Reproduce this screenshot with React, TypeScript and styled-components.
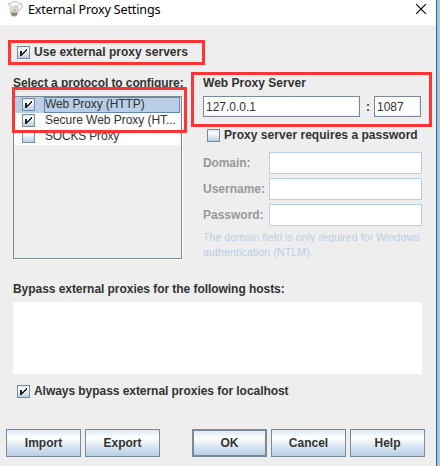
import React from 'react';
import styled, { createGlobalStyle } from 'styled-components';

const Global = createGlobalStyle`
  * { box-sizing: border-box; }
  body { margin: 0; overflow: hidden; background: #eee; }
`;

const oceanGradient = 'linear-gradient(#dde8f3 0%, #fff 30%, #dde8f3 60%, #b8cfe5 100%)';

const Dialog = styled.div`
  position: relative;
  width: 440px;
  height: 466px;
  padding-right: 4px;
  background: linear-gradient(90deg, #0078d7 0 1px, #b4b4b4 1px, #c8c8c8 4px) right / 4px 100% no-repeat, #eee;
  font: bold 12px 'Liberation Sans', Arial, sans-serif;
  color: #333;
  overflow: hidden;
`;

const TitleBar = styled.header`
  display: flex;
  height: 25px;
  background: #fff;
  color: #000;
  padding: 0 10px 0 7px;
  justify-content: space-between;
`;

const TitleGroup = styled.div`
  display: flex;
  gap: 5px;
`;

const Title = styled.span`
  font: 12.6px/19px 'Noto Sans', 'Open Sans', sans-serif;
  letter-spacing: -0.16px;
  white-space: nowrap;
`;

const CloseIcon = styled.svg`
  margin-top: 4px;
`;

const Label = styled.span<{ $spacing?: number; $muted?: boolean }>`
  line-height: 14px;
  white-space: nowrap;
  letter-spacing: ${p => p.$spacing ?? 0}px;
  color: ${p => (p.$muted ? '#999' : '#333')};
`;

const CheckRow = styled.label`
  display: flex;
  align-items: flex-start;
  gap: 4px;
  height: 14px;

  ${Label} {
    margin-top: -1px;
  }
`;

const Box = styled.span`
  flex: none;
  width: 13px;
  height: 13px;
  border: 1px solid #7a8a99;
  background: ${oceanGradient};
`;

const Tick = styled.svg`
  display: block;
  margin: -1px;
`;

const EnableRow = styled.div`
  padding: 21px 0 0 17px;
  height: 51px;
`;

const Columns = styled.div`
  display: grid;
  grid-template-columns: 170px 219px;
  column-gap: 20px;
  padding-left: 13px;
  height: 206px;
`;

const Column = styled.section`
  display: flex;
  flex-direction: column;
`;

const List = styled.ul`
  list-style: none;
  margin: 6px 0 0;
  padding: 0 1px 0 0;
  width: 169px;
  height: 163px;
  border: 1px solid #7a8a99;
  box-shadow: 1px 1px 0 #fff;
`;

const ListItem = styled.li<{ $selected?: boolean }>`
  display: flex;
  align-items: flex-start;
  height: 16px;
  padding-left: 8px;
  background: ${p => (p.$selected ? '#b8cfe5' : '#fff')};

  ${Box} {
    margin-top: 1px;
  }
`;

const ItemText = styled.span<{ $selected?: boolean; $spacing: number }>`
  flex: 1;
  margin-left: 9px;
  height: 16px;
  border: 1px solid ${p => (p.$selected ? '#6382bf' : 'transparent')};
  font-weight: normal;
  line-height: 13px;
  letter-spacing: ${p => p.$spacing}px;
  white-space: nowrap;
`;

const ServerRow = styled.div`
  display: flex;
  align-items: center;
  margin: 6px 0 12px;
  height: 21px;
`;

const Colon = styled.span`
  width: 14px;
  text-align: center;
  padding-left: 2px;
`;

const Field = styled.input<{ $width: number; $inactive?: boolean }>`
  width: ${p => p.$width}px;
  height: ${p => (p.$inactive ? 22 : 21)}px;
  padding: 0 0 0 2px;
  border: 1px solid ${p => (p.$inactive ? '#b8cfe5' : '#7a8a99')};
  border-radius: 0;
  box-shadow: ${p => (p.$inactive ? 'none' : 'inset -1px -1px 0 #eee')};
  background: #fff;
  color: #333;
  font: 12px 'Liberation Sans', Arial, sans-serif;
  outline: 0;
`;

const PasswordCheck = styled.div`
  padding-left: 4px;
  height: 23px;
`;

const Credentials = styled.div`
  display: grid;
  grid-template-columns: 66px 153px;
  row-gap: 4px;
  align-items: center;
`;

const Note = styled.p`
  margin: 4px 0 0;
  font-size: 10.5px;
  font-weight: normal;
  line-height: 15px;
  color: #b8cfe5;
  white-space: nowrap;
`;

const NoteLine = styled.span<{ $spacing: number }>`
  display: block;
  letter-spacing: ${p => p.$spacing}px;
`;

const Bypass = styled.section`
  display: flex;
  flex-direction: column;
  padding-left: 13px;
`;

const Hosts = styled.textarea`
  width: 409px;
  height: 72px;
  margin: 6px 0 11px;
  border: 0;
  resize: none;
  background: #fff;
  outline: 0;
`;

const BypassCheck = styled.div`
  padding-left: 4px;
`;

const Footer = styled.footer`
  display: flex;
  justify-content: space-between;
  padding: 30px 11px 0 6px;
`;

const ButtonGroup = styled.div`
  display: flex;
  gap: 4px;
`;

const Button = styled.button<{ $primary?: boolean }>`
  width: 75px;
  height: 28px;
  padding: 0 0 1px;
  border: ${p => (p.$primary ? 2 : 1)}px solid #7a8a99;
  border-radius: 0;
  background: ${oceanGradient};
  color: #333;
  font: bold 12px 'Liberation Sans', Arial, sans-serif;
`;

const Highlight = styled.div<{ $x: number; $y: number; $w: number; $h: number }>`
  position: absolute;
  left: ${p => p.$x}px;
  top: ${p => p.$y}px;
  width: ${p => p.$w}px;
  height: ${p => p.$h}px;
  border: 3px solid #ff3535;
  pointer-events: none;
`;

const JugSvg = styled.svg`
  flex: none;
`;

function Jug() {
  return (
    <JugSvg width="16" height="18" viewBox="0 0 16 18">
      <path d="M1 3.2 3.4 3.6 5 2 10 1.2 11.5 2.8 15 3.8 15.2 7 12.4 11 10.6 13.2 10 15.5 7 16.3 4.4 15.4 3.6 12 3.2 7Z" fill="#eceae7" stroke="#b9b8b4" strokeWidth="0.8" />
      <path d="M12.2 5 14 5.4 13.6 7.4 12.2 9Z" fill="#fff" />
      <path d="M4 12.2 10.3 12.8 9.8 15.3 7 16.2 4.6 15.3Z" fill="#8f8a82" />
      <path d="M4.5 4.3 10.5 3" stroke="#fff" strokeWidth="1.5" />
      <circle cx="6" cy="8" r=".8" fill="#b59a6d" />
      <circle cx="9" cy="7" r=".8" fill="#5ba36a" />
      <circle cx="8" cy="9.7" r=".8" fill="#d0655c" />
      <circle cx="10.4" cy="9.6" r=".8" fill="#b573ae" />
      <circle cx="6" cy="11" r=".8" fill="#6aa35a" />
      <circle cx="9" cy="12" r=".7" fill="#d0544a" />
    </JugSvg>
  );
}

function CheckBox({ checked }: { checked?: boolean }) {
  return (
    <Box>
      {checked && (
        <Tick width="13" height="13" viewBox="0 0 13 13" shapeRendering="crispEdges" fill="#222">
          <path d="M3 5h2v5H3z M9 3h1v2H9z M8 4h1v2H8z M7 5h1v2H7z M6 6h1v2H6z M5 7h1v2H5z" />
        </Tick>
      )}
    </Box>
  );
}

const protocols = [
  { name: 'Web Proxy (HTTP)', checked: true, selected: true, spacing: -0.1 },
  { name: 'Secure Web Proxy (HT...', checked: true, selected: false, spacing: -0.04 },
  { name: 'SOCKS Proxy', checked: false, selected: false, spacing: -0.18 },
];

export default function App() {
  return (
    <Dialog>
      <Global />
      <TitleBar>
        <TitleGroup>
          <Jug />
          <Title>External Proxy Settings</Title>
        </TitleGroup>
        <CloseIcon width="10" height="10" viewBox="0 0 10 10">
          <path d="M0 0 10 10M10 0 0 10" stroke="#000" strokeWidth="1.1" />
        </CloseIcon>
      </TitleBar>

      <EnableRow>
        <CheckRow>
          <CheckBox checked />
          <Label $spacing={0.02}>Use external proxy servers</Label>
        </CheckRow>
      </EnableRow>

      <Columns>
        <Column>
          <Label $spacing={-0.09}>Select a protocol to configure:</Label>
          <List>
            {protocols.map(p => (
              <ListItem key={p.name} $selected={p.selected}>
                <CheckBox checked={p.checked} />
                <ItemText $selected={p.selected} $spacing={p.spacing}>{p.name}</ItemText>
              </ListItem>
            ))}
          </List>
        </Column>
        <Column>
          <Label $spacing={0.02}>Web Proxy Server</Label>
          <ServerRow>
            <Field $width={157} defaultValue="127.0.0.1" />
            <Colon>:</Colon>
            <Field $width={47} defaultValue="1087" />
          </ServerRow>
          <PasswordCheck>
            <CheckRow>
              <CheckBox />
              <Label $spacing={0.03}>Proxy server requires a password</Label>
            </CheckRow>
          </PasswordCheck>
          <Credentials>
            <Label $muted $spacing={-0.1}>Domain:</Label>
            <Field $width={153} $inactive readOnly />
            <Label $muted>Username:</Label>
            <Field $width={153} $inactive readOnly />
            <Label $muted>Password:</Label>
            <Field $width={153} $inactive readOnly />
          </Credentials>
          <Note>
            <NoteLine $spacing={0.09}>The domain field is only required for Windows</NoteLine>
            <NoteLine $spacing={0.14}>authentication (NTLM).</NoteLine>
          </Note>
        </Column>
      </Columns>

      <Bypass>
        <Label $spacing={-0.05}>Bypass external proxies for the following hosts:</Label>
        <Hosts />
        <BypassCheck>
          <CheckRow>
            <CheckBox checked />
            <Label $spacing={-0.05}>Always bypass external proxies for localhost</Label>
          </CheckRow>
        </BypassCheck>
      </Bypass>

      <Footer>
        <ButtonGroup>
          <Button>Import</Button>
          <Button>Export</Button>
        </ButtonGroup>
        <ButtonGroup>
          <Button $primary>OK</Button>
          <Button>Cancel</Button>
          <Button>Help</Button>
        </ButtonGroup>
      </Footer>

      <Highlight $x={8} $y={40} $w={197} $h={25} />
      <Highlight $x={12} $y={87} $w={175} $h={46} />
      <Highlight $x={191} $y={72} $w={241} $h={55} />
    </Dialog>
  );
}
